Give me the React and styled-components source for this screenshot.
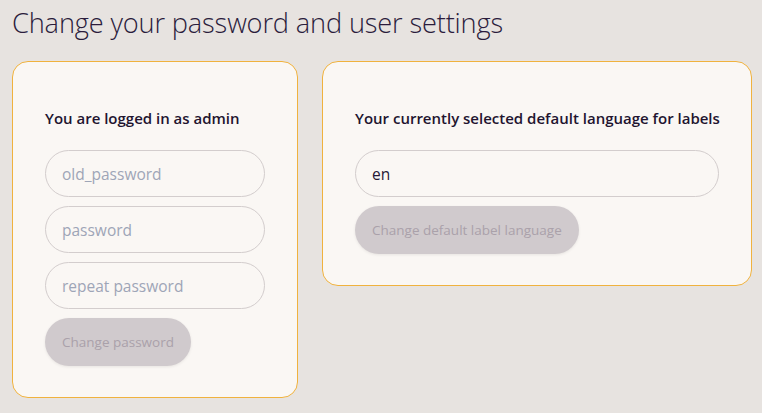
import React from "react";
import styled, { createGlobalStyle } from "styled-components";

const Global = createGlobalStyle`
  html, body { margin: 0; padding: 0; }
  body {
    background: #e7e3e0;
    font-family: "Open Sans", "Noto Sans", sans-serif;
    color: #261836;
  }
`;

const Page = styled.div`
  padding: 0 10px 0 12px;
`;

const Title = styled.h1`
  margin: 0;
  padding-top: 5px;
  font-size: 27.2px;
  line-height: 36px;
  font-weight: 300;
  letter-spacing: -0.15px;
  color: #2b1c3c;
`;

const Cards = styled.div`
  display: flex;
  align-items: flex-start;
  gap: 24px;
  margin-top: 20px;
`;

const Card = styled.section`
  flex: 0 0 auto;
  box-sizing: border-box;
  width: ${(p) => p.$w}px;
  background: #faf7f4;
  border: 1px solid #f0b23e;
  border-radius: 16px;
  padding: 32px 32px 31px;
  display: flex;
  flex-direction: column;
  gap: 9px;
`;

const Heading = styled.h3`
  margin: 14px 0 13px;
  font-size: 15px;
  line-height: 20px;
  font-weight: 600;
  color: #22142f;
  white-space: nowrap;
`;

const Input = styled.input`
  box-sizing: border-box;
  width: 100%;
  height: 47px;
  border: 1px solid #d3cdcd;
  border-radius: 999px;
  background: #faf7f4;
  padding: 0 16px;
  font-family: inherit;
  font-size: 15.5px;
  color: #261836;
  outline: none;
  &::placeholder { color: #9ea5b7; }
`;

const Button = styled.button`
  align-self: flex-start;
  box-sizing: border-box;
  height: 48px;
  border: none;
  border-radius: 999px;
  background: #d0cacd;
  color: #aaa1aa;
  padding: 0 17px;
  font-family: inherit;
  font-size: 13.5px;
  box-shadow: 0 1px 3px rgba(0,0,0,0.08);
`;

export default function App() {
  return (
    <Page>
      <Global />
      <Title>Change your password and user settings</Title>
      <Cards>
        <Card $w={286}>
          <Heading>You are logged in as admin</Heading>
          <Input placeholder="old_password" />
          <Input placeholder="password" type="password" />
          <Input placeholder="repeat password" type="password" />
          <Button disabled>Change password</Button>
        </Card>
        <Card $w={430}>
          <Heading>Your currently selected default language for labels</Heading>
          <Input defaultValue="en" />
          <Button disabled>Change default label language</Button>
        </Card>
      </Cards>
    </Page>
  );
}
